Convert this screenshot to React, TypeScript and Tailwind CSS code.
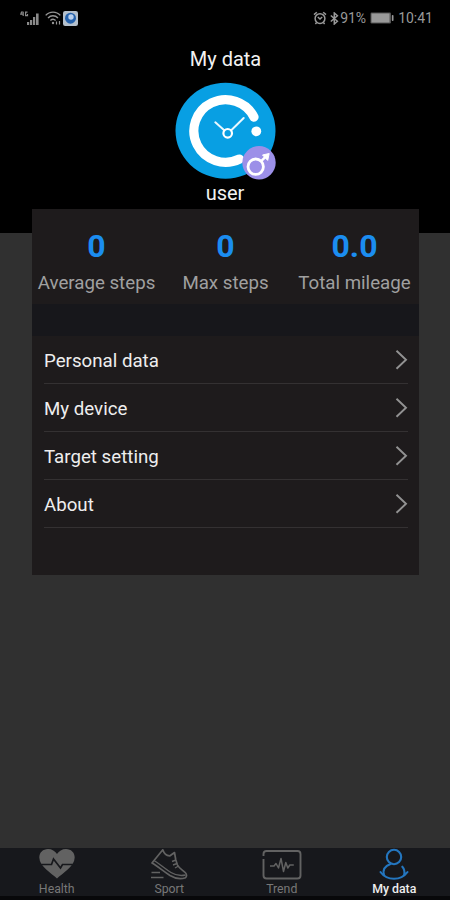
import type { ReactNode } from "react";

const stats = [
  { value: "0", label: "Average steps" },
  { value: "0", label: "Max steps" },
  { value: "0.0", label: "Total mileage" },
];

const menu = ["Personal data", "My device", "Target setting", "About"];

function StatusBar() {
  return (
    <div className="flex h-9 items-center justify-between pl-5 pr-[17px] text-[#999]">
      <div className="flex items-center">
        <svg width="22" height="16" viewBox="0 0 22 16" fill="#8a8a8a">
          <path d="M3.500 2H1.500L.8 4.200h2.400M3.200 2v4M7.500 2.200H5.600v3.400h1.900V4" fill="none" stroke="#8a8a8a" strokeWidth="1.200" />
          <rect x="7" y="12" width="2.200" height="3" />
          <rect x="10" y="10" width="2.200" height="5" />
          <rect x="13" y="7" width="2.200" height="8" />
          <rect x="16" y="3.500" width="2.600" height="11.500" />
        </svg>
        <svg className="ml-[3px]" width="17" height="16" viewBox="0 0 17 16" fill="none" stroke="#959595" strokeWidth="1.400">
          <path d="M.7 5.400C4.500 1 11.500 1 15.300 5.400M3 8c2.900-3 7-3 10 0M5.400 10.500c1.600-1.500 3.700-1.500 5.200 0" />
          <circle cx="8" cy="13" r="1.200" fill="#959595" stroke="none" />
          <path d="M11.500 14.500v-3M14.500 11v3.500" strokeWidth="1.200" />
        </svg>
        <svg className="ml-[1px]" width="15" height="15" viewBox="0 0 15 15">
          <rect width="15" height="15" rx="2.200" fill="#b4c0cc" />
          <circle cx="7.500" cy="7.200" r="5.500" fill="#2461ac" />
          <circle cx="8" cy="6" r="2.700" fill="#b8d0ee" />
        </svg>
      </div>
      <div className="flex items-center text-sm leading-none">
        <svg width="14" height="14" viewBox="0 0 14 14" fill="none" stroke="#999" strokeWidth="1.500">
          <circle cx="7" cy="7.600" r="4.900" />
          <path d="M1 3.600 3.800 1.200M13 3.600l-2.800-2.400M4.800 6l2.200 2 2.200-2M3.600 11.500l-1.200 1.400M10.400 11.500l1.200 1.400" />
        </svg>
        <svg className="ml-[3px]" width="9" height="13" viewBox="0 0 9 13" fill="none" stroke="#999" strokeWidth="1.500">
          <path d="M.8 3.500 7.400 9.200 4.300 12V1l3.100 2.800L.8 9.500" />
        </svg>
        <span className="ml-[1px]">91%</span>
        <svg className="ml-[4px]" width="25" height="12" viewBox="0 0 25 12" fill="#999">
          <rect x=".5" y=".5" width="20.500" height="11" rx="1.200" fill="#555" />
          <rect x="1.500" y="1.500" width="18" height="9" />
          <rect x="21.800" y="3" width="1.700" height="6" rx=".8" />
        </svg>
        <span className="ml-[3px]">10:41</span>
      </div>
    </div>
  );
}

function Avatar() {
  return (
    <svg width="102" height="99" viewBox="0 0 102 99" fill="none">
      <ellipse cx="50.500" cy="48.700" rx="50" ry="48" fill="#089fe3" />
      <path d="M79 35.100A31.700 31.300 0 1 0 64.600 77" stroke="#fff" strokeWidth="9.200" strokeLinecap="round" />
      <circle cx="81.300" cy="49.300" r="4.900" fill="#fff" />
      <path d="m40.300 40.300 9.200 8.200M68.700 36 56 48.500" stroke="#e8f8ff" strokeWidth="2" strokeLinecap="round" />
      <circle cx="52.700" cy="51.300" r="4.300" stroke="#fff" strokeWidth="2.200" />
      <circle cx="84" cy="80.700" r="16.700" fill="#9c90e8" />
      <circle cx="80.700" cy="84.700" r="7.700" stroke="#fff" strokeWidth="2.800" />
      <path d="m86.200 79.200 6-6" stroke="#fff" strokeWidth="2.400" />
      <path d="m87.500 73 6.700-1.500-1.500 6.900z" fill="#fff" stroke="#fff" strokeWidth="1" />
    </svg>
  );
}

function HealthIcon() {
  return (
    <svg width="38" height="32" viewBox="0 0 38 32">
      <path d="M19 30.500C14 25.500 1.300 18.500 1.300 9.500 1.300 4.500 5 1 10 1c4 0 7 2 9 5 2-3 5-5 9-5 5 0 8.700 3.500 8.700 8.500 0 9-12.700 16-17.700 21z" fill="#626262" />
      <path d="M1 16.500h12.500l2-5.500 7 9 2-3.500H37" fill="none" stroke="#17181c" strokeWidth="1.700" />
    </svg>
  );
}

function SportIcon() {
  return (
    <svg width="38" height="32" viewBox="0 0 38 32" fill="none" stroke="#626262" strokeWidth="1.700" strokeLinejoin="round">
      <path d="M12.800 1.800 2 15C8 18.500 13 23 20 27.500c5 3 11 3.800 15.500 2.200 1.500-1.200 1.300-3.700-.3-5.200-2.500-2.400-6-4-7.700-7.500L25.800 12 24.500 4.500l-4.500 3.300C16.500 8 14 5.500 12.800 1.800z" />
      <path d="M4 12.500C10 16 14.500 20.500 21 24.500c5 3 10 3.500 14.500 2.500M22 13.500l4-1.500M23 17l4-1.500M25 20l3.500-2" strokeWidth="1.400" />
      <path d="M1.500 24.500H10M1 29.500h12.500" />
    </svg>
  );
}

function TrendIcon() {
  return (
    <svg width="40" height="32" viewBox="0 0 40 32" fill="none" stroke="#626262" strokeWidth="1.900" strokeLinejoin="round">
      <path d="M1.500 8V6q0-3 3-3h31q3 0 3 3v21.500q0 3-3 3h-31q-3 0-3-3V11" />
      <path d="M8 18h4l2-2.500 2.500 4.500 2.500-9.500 2.500 13 2.300-9 2 5.500 2-3h4" strokeWidth="1.500" />
    </svg>
  );
}

function ProfileIcon() {
  return (
    <svg width="32" height="32" viewBox="0 0 32 32" fill="none" stroke="#2476bf" strokeWidth="2.100" strokeLinecap="round">
      <circle cx="16" cy="9" r="7.200" />
      <path d="M12.500 16C7 18 4.500 22 6 27" />
      <path d="M2.500 24C9 33 23 33 29.500 24M26 27.500c1-3.600.6-6.300-1.700-8.800" />
    </svg>
  );
}

function NavItem({ icon, label, active }: { icon: ReactNode; label: string; active?: boolean }) {
  return (
    <button className="flex flex-1 flex-col items-center pl-px">
      {icon}
      <span
        className={
          active
            ? "mt-[2px] text-[12.3px] leading-[14px] font-medium text-[#eee]"
            : "mt-[2px] text-[12.3px] leading-[14px] text-[#777]"
        }
      >
        {label}
      </span>
    </button>
  );
}

export default function App() {
  return (
    <div className="flex h-[900px] w-[450px] flex-col overflow-hidden bg-[#303030] font-['Roboto',sans-serif]">
      <header className="h-[233px] shrink-0 bg-black">
        <StatusBar />
        <div className="flex flex-col items-center text-[#f2f2f2]">
          <h1 className="mt-[11px] pl-px text-xl leading-6">My data</h1>
          <div className="mt-[11px] ml-[2px]">
            <Avatar />
          </div>
          <p className="text-xl leading-6">user</p>
        </div>
      </header>

      <main className="flex-1">
        <section className="-mt-6 ml-8 h-[366px] w-[387px] bg-[#1e1b1c]">
          <div className="grid h-[95px] grid-cols-3 pt-[19px] text-center">
            {stats.map((s) => (
              <div key={s.label}>
                <div className="text-[32px] leading-9 font-bold text-[#1b8df0]">{s.value}</div>
                <div className="mt-[7px] text-[18.7px] leading-6 whitespace-nowrap text-[#a0a0a0]">{s.label}</div>
              </div>
            ))}
          </div>
          <div className="h-8 bg-[#17171b]" />
          <ul className="pr-[11px] pl-3">
            {menu.map((item) => (
              <li key={item} className="flex h-12 items-center justify-between border-b border-[#343132]">
                <span className="pt-[3px] text-[18.7px] text-[#eee]">{item}</span>
                <svg width="13" height="20" viewBox="0 0 13 20" fill="none" stroke="#929292" strokeWidth="1.900">
                  <path d="m1.500 .8 9.500 9-9.500 9" />
                </svg>
              </li>
            ))}
          </ul>
        </section>
      </main>

      <nav className="flex h-[52px] shrink-0 border-b-4 border-[#08080a] bg-[#17181c]">
        <NavItem icon={<HealthIcon />} label="Health" />
        <NavItem icon={<SportIcon />} label="Sport" />
        <NavItem icon={<TrendIcon />} label="Trend" />
        <NavItem icon={<ProfileIcon />} label="My data" active />
      </nav>
    </div>
  );
}
